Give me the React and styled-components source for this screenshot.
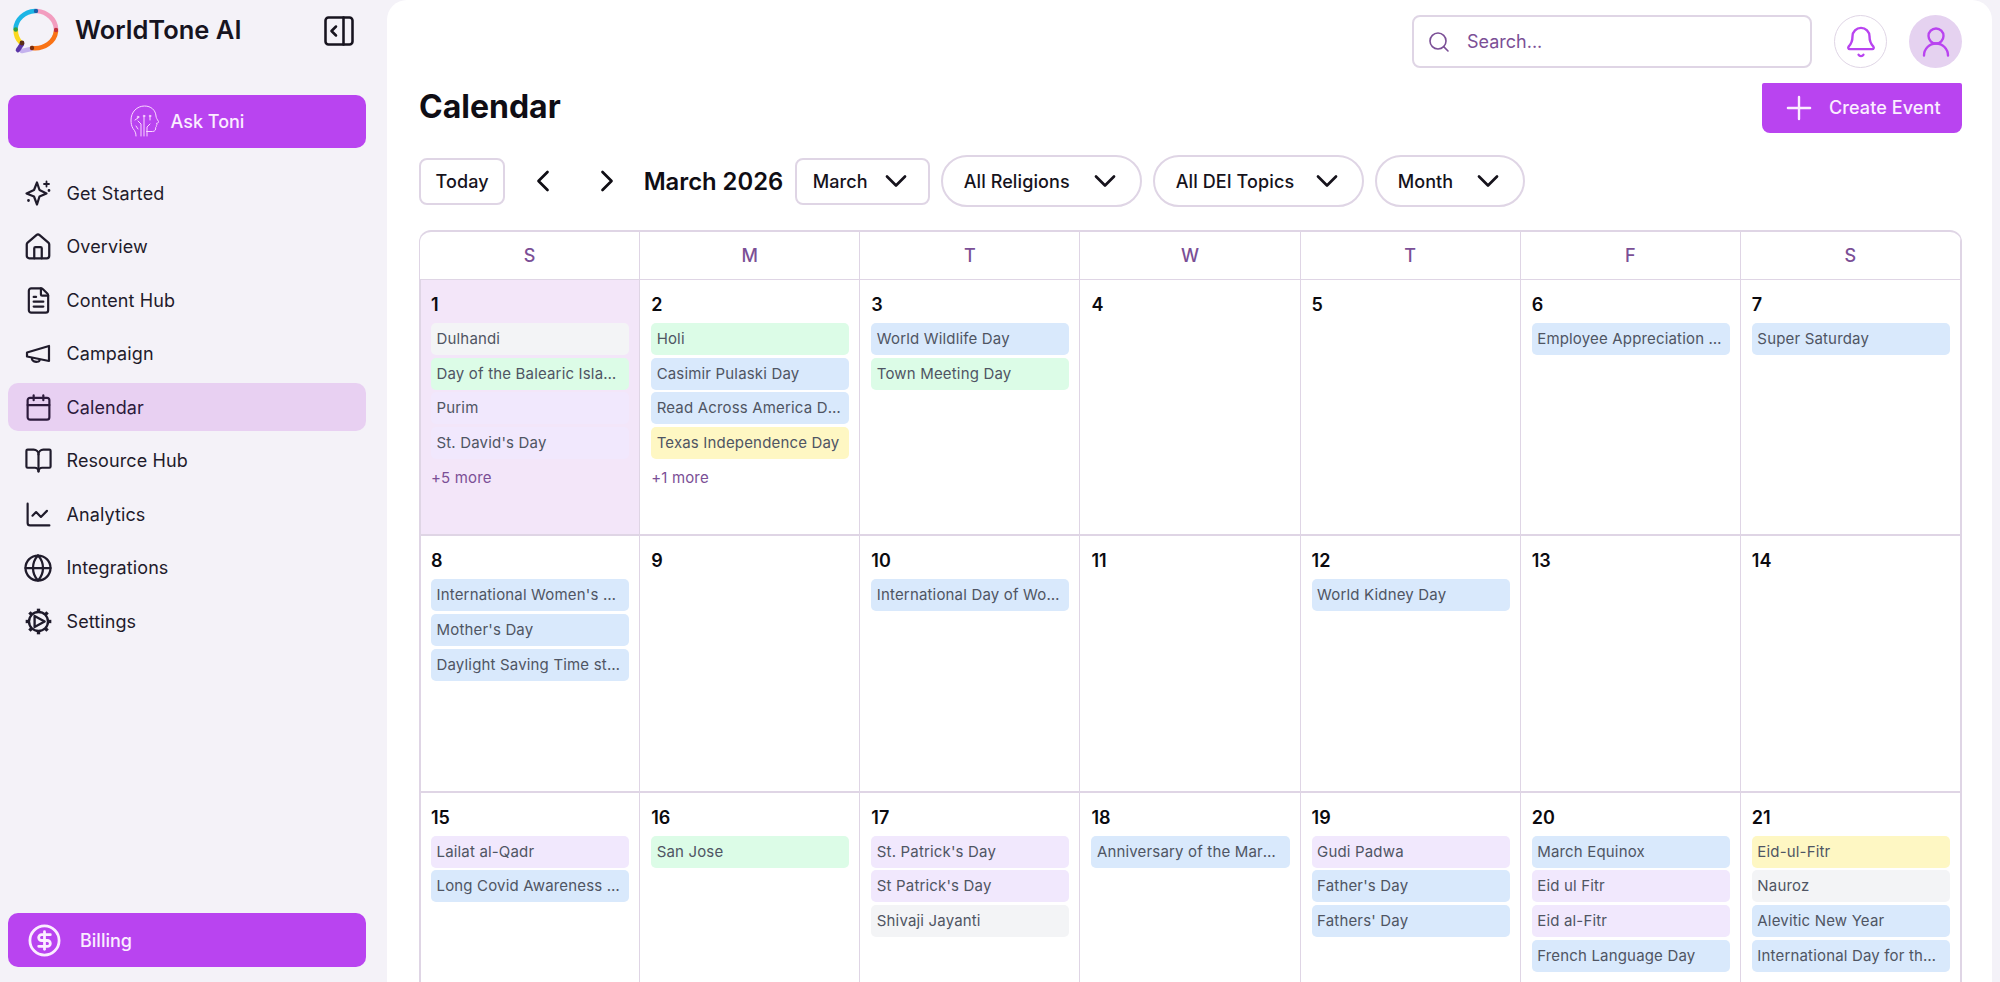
import React from 'react';
import styled, { createGlobalStyle } from 'styled-components';
import {
  PanelRightOpen, House, FileText, Calendar as CalendarIcon, BookOpen, ChartLine, Globe,
  CircleDollarSign, Search, Bell, UserRound, Plus, ChevronDown, ChevronLeft, ChevronRight,
} from 'lucide-react';

const PURPLE = '#b944f0';
const LINE = '#dfd5e5';
const INK = '#1f1b2b';
const MUTED = '#7b4f96';

const tones = {
  gray: '#f3f4f6',
  green: '#dcfce7',
  blue: '#d9e9fc',
  yellow: '#fef7c3',
  purple: '#f1e8fd',
};

const GlobalStyle = createGlobalStyle`
  html, body { margin: 0; padding: 0; height: 100%; }
  body { font-family: Inter, "Noto Sans", sans-serif; background: #f4f2f8; color: ${INK}; overflow: hidden; }
  * { box-sizing: border-box; }
`;

const Page = styled.div`
  display: flex;
  height: 982px;
  overflow: hidden;
`;

const Sidebar = styled.aside`
  width: 387px;
  flex: none;
  display: flex;
  flex-direction: column;
  padding: 0 21px 15px 8px;
`;

const BrandRow = styled.div`
  height: 95px;
  display: flex;
  align-items: flex-start;
  padding: 8px 9px 0 4px;
`;

const BrandName = styled.div`
  margin-left: 15px;
  margin-top: 6px;
  font-size: 25.5px;
  line-height: 32px;
  font-weight: 600;
  color: #17141f;
  flex: 1;
`;

const CollapseIcon = styled.div`
  margin-top: 5px;
  color: #17141f;
  display: flex;
`;

const PrimaryBar = styled.div`
  display: flex;
  align-items: center;
  justify-content: ${(p) => (p.$center ? 'center' : 'flex-start')};
  gap: ${(p) => (p.$center ? '11px' : '18px')};
  height: ${(p) => (p.$center ? '53px' : '54px')};
  padding: ${(p) => (p.$center ? '0' : '0 0 0 19px')};
  border-radius: 10px;
  background: ${PURPLE};
  color: #fbeeff;
  font-size: 18px;
  font-weight: 500;
`;

const Nav = styled.nav`
  display: flex;
  flex-direction: column;
  gap: 5.5px;
  margin-top: 21px;
`;

const NavItem = styled.div`
  display: flex;
  align-items: center;
  gap: 13.5px;
  height: 48px;
  padding-left: 15px;
  border-radius: 10px;
  font-size: 18px;
  letter-spacing: 0.1px;
  color: ${(p) => (p.$active ? '#2c1a3c' : INK)};
  background: ${(p) => (p.$active ? '#e8d0f2' : 'transparent')};
`;

const NavIcon = styled.span`
  width: 30px;
  height: 30px;
  display: flex;
  align-items: center;
  justify-content: center;
  flex: none;
`;

const Spacer = styled.div`
  flex: 1;
`;

const Main = styled.main`
  flex: 1;
  min-width: 0;
  margin-right: 8px;
  padding: 15px 30px 0 32px;
  background: #fff;
  border-radius: 20px 20px 0 0;
  overflow: hidden;
`;

const TopBar = styled.div`
  display: flex;
  justify-content: flex-end;
  gap: 22px;
`;

const SearchBox = styled.div`
  width: 400px;
  height: 53px;
  display: flex;
  align-items: center;
  gap: 16px;
  padding-left: 13px;
  border: 2px solid ${LINE};
  border-radius: 8px;
  font-size: 18px;
  color: ${MUTED};
`;

const RoundButton = styled.div`
  width: 53px;
  height: 53px;
  border-radius: 50%;
  display: flex;
  align-items: center;
  justify-content: center;
  color: ${PURPLE};
  background: ${(p) => (p.$filled ? '#e5d2f0' : '#fff')};
  border: ${(p) => (p.$filled ? 'none' : `1px solid ${LINE}`)};
`;

const TitleRow = styled.div`
  display: flex;
  justify-content: space-between;
  align-items: flex-start;
  margin-top: 15px;
  height: 50px;
`;

const PageTitle = styled.h1`
  margin: 3px 0 0;
  font-size: 32px;
  line-height: 42px;
  font-weight: 700;
  color: #0f0d14;
`;

const CreateButton = styled.div`
  width: 200px;
  height: 50px;
  display: flex;
  align-items: center;
  gap: 11px;
  padding: 0 0 1px 18px;
  background: ${PURPLE};
  color: #fbeeff;
  border-radius: 2px 2px 8px 8px;
  font-size: 18px;
  font-weight: 500;
  letter-spacing: 0.1px;
`;

const Toolbar = styled.div`
  display: flex;
  align-items: center;
  gap: 11px;
  margin-top: 22px;
  height: 52px;
`;

const BoxButton = styled.div`
  height: 47px;
  display: flex;
  align-items: center;
  padding: 0 14.5px;
  border: 2px solid ${LINE};
  border-radius: 8px;
  font-size: 18px;
  font-weight: 500;
  letter-spacing: 0.1px;
  color: #16131c;
  background: #fff;
`;

const SelectBox = styled(BoxButton)`
  width: ${(p) => p.$width}px;
  justify-content: space-between;
  padding: 0 14px 0 16px;
`;

const PillSelect = styled(BoxButton)`
  width: ${(p) => p.$width}px;
  height: 52px;
  justify-content: space-between;
  padding: 0 17px 0 21px;
  border-radius: 26px;
`;

const ArrowGroup = styled.div`
  display: flex;
  gap: 23.5px;
  padding: 0 6px 0 7px;
`;

const ArrowButton = styled.div`
  width: 40px;
  height: 40px;
  display: flex;
  align-items: center;
  justify-content: center;
  color: #0f0d14;
`;

const MonthLabel = styled.div`
  font-size: 23.8px;
  font-weight: 600;
  color: #0f0d14;
  width: 140px;
  white-space: nowrap;
`;

const CalendarFrame = styled.section`
  margin-top: 23px;
  border: 1px solid ${LINE};
  border-top-width: 2px;
  border-bottom: none;
  border-radius: 12px 12px 0 0;
  overflow: hidden;
`;

const Grid = styled.div`
  display: grid;
  grid-template-columns: repeat(7, 1fr);
  grid-auto-rows: 256.4px;
`;

const HeadRow = styled.div`
  display: grid;
  grid-template-columns: repeat(7, 1fr);
`;

const HeadCell = styled.div`
  height: 48px;
  display: flex;
  align-items: center;
  justify-content: center;
  font-size: 18px;
  font-weight: 500;
  color: ${MUTED};
  border-right: 1px solid ${LINE};
  border-bottom: 1px solid ${LINE};
`;

const DayCell = styled.div`
  min-width: 0;
  padding: 13px 10px 0 11px;
  border-right: 1px solid ${LINE};
  border-bottom: 2px solid ${LINE};
  background: ${(p) => (p.$today ? '#f3e6f9' : '#fff')};
  &:nth-child(7n + 1) { box-shadow: inset 1px 0 0 ${LINE}; }
`;

const DayNumber = styled.div`
  font-size: 18px;
  line-height: 24px;
  font-weight: 600;
  color: #0b0a0f;
  margin-bottom: 6px;
`;

const ChipList = styled.div`
  display: flex;
  flex-direction: column;
  gap: 2.7px;
`;

const Chip = styled.div`
  height: 32px;
  line-height: 32px;
  padding: 0 8px 0 5.5px;
  border-radius: 5px;
  background: ${(p) => tones[p.$tone]};
  font-size: 15px;
  letter-spacing: 0.17px;
  color: #4f5563;
  white-space: nowrap;
  overflow: hidden;
  text-overflow: ellipsis;
`;

const MoreLink = styled.div`
  height: 32px;
  line-height: 32px;
  font-size: 15px;
  letter-spacing: 0.17px;
  color: ${MUTED};
`;

const Logo = () => (
  <svg width="48" height="46" viewBox="0 0 48 46" fill="none" strokeWidth="4.6" strokeLinecap="round">
    <path d="M4.5 21 A21 19 0 0 1 24 3" stroke="#1cb6e6" transform="translate(-1 0)" />
    <path d="M25 3 A21 19 0 0 1 44 21" stroke="#f29dbf" />
    <path d="M44 23 A21 19 0 0 1 20 40" stroke="#f97316" />
    <path d="M3.7 22 A21 19 0 0 0 9 35" stroke="#fbd81e" />
    <path d="M19 41 L10 43" stroke="#c4b2ee" />
    <path d="M10 36 L6 42" stroke="#5b36a8" />
    <circle cx="24" cy="3" r="2.2" fill="#1d5fa8" />
    <circle cx="44" cy="22" r="2.2" fill="#c22e3c" />
    <circle cx="3.8" cy="21.5" r="2.2" fill="#2f9e44" />
    <circle cx="10" cy="35" r="2.4" fill="#5a2c16" />
    <circle cx="20" cy="40" r="2.2" fill="#7a2f10" />
  </svg>
);

const HeadIcon = () => (
  <svg width="30" height="34" viewBox="0 0 30 34" fill="none" stroke="#fbd9ff" strokeWidth="1" strokeLinecap="round" strokeLinejoin="round">
    <path d="M6 31c0-3-1-5-3-7.500C1.500 21 1 18.500 1 15 1 7 7 1 14.500 1 21 1 25.500 5 26 11c.2 2 1 3 2.500 5.500.5 1-.5 1.500-2 1.800.6 1 .6 1.800-.3 2.400.5 1-.2 1.500-.6 1.800.4 2-.5 4-3 4h-6" />
    <path d="M11 31V19l-3-3M14 31V12M17 31v-9l3-3M8 24l-2-3M5 15l3-2M20 12v3" />
    <circle cx="14" cy="11" r=".8" />
    <circle cx="20" cy="11" r=".8" />
    <circle cx="8" cy="12" r=".8" />
  </svg>
);

const SparkIcon = () => (
  <svg width="26" height="26" viewBox="0 0 26 26" fill="none" stroke="currentColor" strokeWidth="2.2" strokeLinecap="round" strokeLinejoin="round">
    <path d="M12 2.500 14.500 10 21.500 13.500 14.500 16.500 12 24.500 9 16.500 1.500 13.500 9 10Z" />
    <path d="M21.500 1.500v5M19 4h5" strokeWidth="1.800" />
    <path d="M24 10.500v.1M3.500 20.500v.1" strokeWidth="2.800" />
  </svg>
);

const MegaphoneIcon = () => (
  <svg width="26" height="26" viewBox="0 0 26 26" fill="none" stroke="currentColor" strokeWidth="2.2" strokeLinecap="round" strokeLinejoin="round">
    <path d="M2 11.500 24 5v15L2 15.500Z" />
    <path d="M7 17c-.5 3 3 4.500 6.500 3.500.8-.3 1-.8 1.200-1.500" />
  </svg>
);

const CogPlayIcon = () => {
  const teeth = [0, 45, 90, 135, 180, 225, 270, 315];
  return (
    <svg width="29" height="29" viewBox="0 0 26 26" fill="none" stroke="currentColor" strokeWidth="2.1" strokeLinejoin="round">
      <circle cx="13" cy="13" r="8.500" />
      {teeth.map((a) => (
        <path key={a} d="M13 1.500v3.500" strokeWidth="3" transform={`rotate(${a} 13 13)`} />
      ))}
      <path d="M9.500 8 18.500 13l-9 5Z" />
    </svg>
  );
};

const navItems = [
  { label: 'Get Started', icon: <SparkIcon /> },
  { label: 'Overview', icon: <House size={30} strokeWidth={1.8} /> },
  { label: 'Content Hub', icon: <FileText size={29} strokeWidth={1.8} /> },
  { label: 'Campaign', icon: <MegaphoneIcon /> },
  { label: 'Calendar', icon: <CalendarIcon size={29} strokeWidth={1.8} />, active: true },
  { label: 'Resource Hub', icon: <BookOpen size={29} strokeWidth={1.8} /> },
  { label: 'Analytics', icon: <ChartLine size={29} strokeWidth={1.8} /> },
  { label: 'Integrations', icon: <Globe size={30} strokeWidth={1.8} /> },
  { label: 'Settings', icon: <CogPlayIcon /> },
];

const weekDays = ['S', 'M', 'T', 'W', 'T', 'F', 'S'];

const days = [
  { day: 1, today: true, more: '+5 more', events: [['Dulhandi', 'gray'], ['Day of the Balearic Islands', 'green'], ['Purim', 'purple'], ["St. David's Day", 'purple']] },
  { day: 2, more: '+1 more', events: [['Holi', 'green'], ['Casimir Pulaski Day', 'blue'], ['Read Across America Day', 'blue'], ['Texas Independence Day', 'yellow']] },
  { day: 3, events: [['World Wildlife Day', 'blue'], ['Town Meeting Day', 'green']] },
  { day: 4, events: [] },
  { day: 5, events: [] },
  { day: 6, events: [['Employee Appreciation Day', 'blue']] },
  { day: 7, events: [['Super Saturday', 'blue']] },
  { day: 8, events: [["International Women's Day", 'blue'], ["Mother's Day", 'blue'], ['Daylight Saving Time starts', 'blue']] },
  { day: 9, events: [] },
  { day: 10, events: [['International Day of Women Judges', 'blue']] },
  { day: 11, events: [] },
  { day: 12, events: [['World Kidney Day', 'blue']] },
  { day: 13, events: [] },
  { day: 14, events: [] },
  { day: 15, events: [['Lailat al-Qadr', 'purple'], ['Long Covid Awareness Day', 'blue']] },
  { day: 16, events: [['San Jose', 'green']] },
  { day: 17, events: [["St. Patrick's Day", 'purple'], ["St Patrick's Day", 'purple'], ['Shivaji Jayanti', 'gray']] },
  { day: 18, events: [['Anniversary of the March on Selma', 'blue']] },
  { day: 19, events: [['Gudi Padwa', 'purple'], ["Father's Day", 'blue'], ["Fathers' Day", 'blue']] },
  { day: 20, events: [['March Equinox', 'blue'], ['Eid ul Fitr', 'purple'], ['Eid al-Fitr', 'purple'], ['French Language Day', 'blue']] },
  { day: 21, events: [['Eid-ul-Fitr', 'yellow'], ['Nauroz', 'gray'], ['Alevitic New Year', 'blue'], ['International Day for the Elimination of Racial Discrimination', 'blue']] },
];

const App = () => {
  return (
    <Page>
      <GlobalStyle />
      <Sidebar>
        <BrandRow>
          <Logo />
          <BrandName>WorldTone AI</BrandName>
          <CollapseIcon><PanelRightOpen size={36} strokeWidth={1.7} /></CollapseIcon>
        </BrandRow>
        <PrimaryBar $center><HeadIcon />Ask Toni</PrimaryBar>
        <Nav>
          {navItems.map((item) => (
            <NavItem key={item.label} $active={item.active}>
              <NavIcon>{item.icon}</NavIcon>
              {item.label}
            </NavItem>
          ))}
        </Nav>
        <Spacer />
        <PrimaryBar><CircleDollarSign size={35} strokeWidth={1.9} />Billing</PrimaryBar>
      </Sidebar>
      <Main>
        <TopBar>
          <SearchBox><Search size={24} strokeWidth={1.6} />Search...</SearchBox>
          <RoundButton><Bell size={34} strokeWidth={1.7} /></RoundButton>
          <RoundButton $filled><UserRound size={36} strokeWidth={1.6} /></RoundButton>
        </TopBar>
        <TitleRow>
          <PageTitle>Calendar</PageTitle>
          <CreateButton><Plus size={38} strokeWidth={1.5} />Create Event</CreateButton>
        </TitleRow>
        <Toolbar>
          <BoxButton>Today</BoxButton>
          <ArrowGroup>
            <ArrowButton><ChevronLeft size={36} strokeWidth={1.8} /></ArrowButton>
            <ArrowButton><ChevronRight size={36} strokeWidth={1.8} /></ArrowButton>
          </ArrowGroup>
          <MonthLabel>March 2026</MonthLabel>
          <SelectBox $width={135}>March<ChevronDown size={36} strokeWidth={1.8} /></SelectBox>
          <PillSelect $width={201}>All Religions<ChevronDown size={36} strokeWidth={1.8} /></PillSelect>
          <PillSelect $width={211}>All DEI Topics<ChevronDown size={36} strokeWidth={1.8} /></PillSelect>
          <PillSelect $width={150}>Month<ChevronDown size={36} strokeWidth={1.8} /></PillSelect>
        </Toolbar>
        <CalendarFrame>
          <HeadRow>
            {weekDays.map((d, i) => <HeadCell key={i}>{d}</HeadCell>)}
          </HeadRow>
          <Grid>
            {days.map((cell) => (
              <DayCell key={cell.day} $today={cell.today}>
                <DayNumber>{cell.day}</DayNumber>
                <ChipList>
                  {cell.events.map(([name, tone], i) => (
                    <Chip key={i} $tone={tone}>{name}</Chip>
                  ))}
                  {cell.more && <MoreLink>{cell.more}</MoreLink>}
                </ChipList>
              </DayCell>
            ))}
          </Grid>
        </CalendarFrame>
      </Main>
    </Page>
  );
};

export default App;
